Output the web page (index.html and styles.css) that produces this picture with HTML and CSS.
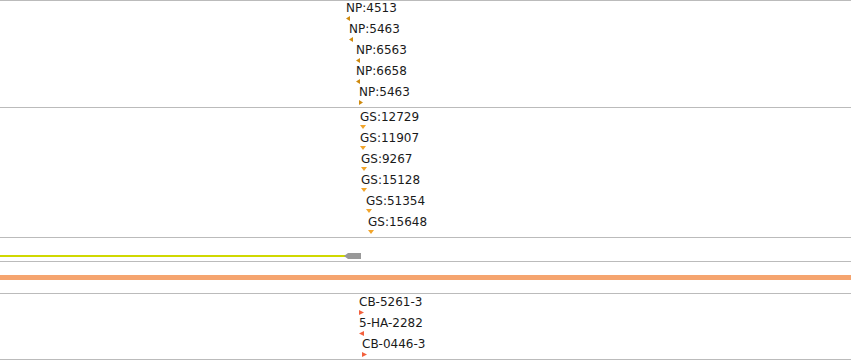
FILE: index.html
```html
<!DOCTYPE html>
<html lang="en">
<head>
    <meta charset="UTF-8">
    <title>Track view</title>
    <link rel="stylesheet" href="styles.css">
</head>
<body>
    <div class="tracks">
        <!-- NP track -->
        <div class="track track-np">
            <div class="feature" style="margin-left:346px"><span class="label">NP:4513</span><svg class="tri" width="5" height="5"><polygon points="4,0 4,5 0,2.5"/></svg></div>
            <div class="feature" style="margin-left:349px"><span class="label">NP:5463</span><svg class="tri" width="5" height="5"><polygon points="4,0 4,5 0,2.5"/></svg></div>
            <div class="feature" style="margin-left:356px"><span class="label">NP:6563</span><svg class="tri" width="5" height="5"><polygon points="4,0 4,5 0,2.5"/></svg></div>
            <div class="feature" style="margin-left:356px"><span class="label">NP:6658</span><svg class="tri" width="5" height="5"><polygon points="4,0 4,5 0,2.5"/></svg></div>
            <div class="feature" style="margin-left:359px"><span class="label">NP:5463</span><svg class="tri" width="5" height="5"><polygon points="0,0 0,5 4,2.5"/></svg></div>
        </div>

        <!-- GS track -->
        <div class="track track-gs">
            <div class="feature" style="margin-left:360px"><span class="label">GS:12729</span><svg class="tri" width="6" height="5"><polygon points="0,0 6,0 3,4"/></svg></div>
            <div class="feature" style="margin-left:360px"><span class="label">GS:11907</span><svg class="tri" width="6" height="5"><polygon points="0,0 6,0 3,4"/></svg></div>
            <div class="feature" style="margin-left:361px"><span class="label">GS:9267</span><svg class="tri" width="6" height="5"><polygon points="0,0 6,0 3,4"/></svg></div>
            <div class="feature" style="margin-left:361px"><span class="label">GS:15128</span><svg class="tri" width="6" height="5"><polygon points="0,0 6,0 3,4"/></svg></div>
            <div class="feature" style="margin-left:366px"><span class="label">GS:51354</span><svg class="tri" width="6" height="5"><polygon points="0,0 6,0 3,4"/></svg></div>
            <div class="feature" style="margin-left:368px"><span class="label">GS:15648</span><svg class="tri" width="6" height="5"><polygon points="0,0 6,0 3,4"/></svg></div>
        </div>

        <!-- transcript track -->
        <div class="track track-tx">
            <div class="tx-row">
                <div class="tx-line"></div>
                <svg class="tx-head" width="17" height="6"><polygon points="0,3 4,0 17,0 17,6 4,6"/></svg>
            </div>
        </div>

        <!-- sequence track -->
        <div class="track track-seq">
            <div class="seq-band"></div>
        </div>

        <!-- CB track -->
        <div class="track track-cb">
            <div class="feature" style="margin-left:359px"><span class="label">CB-5261-3</span><svg class="tri" width="5" height="5"><polygon points="0,0 0,5 5,2.5"/></svg></div>
            <div class="feature" style="margin-left:359px"><span class="label">5-HA-2282</span><svg class="tri" width="5" height="5"><polygon points="5,0 5,5 0,2.5"/></svg></div>
            <div class="feature" style="margin-left:362px"><span class="label">CB-0446-3</span><svg class="tri" width="5" height="5"><polygon points="0,0 0,5 5,2.5"/></svg></div>
        </div>
    </div>
</body>
</html>
```

FILE: styles.css
```css
body {
    margin: 0;
    background-color: #fff;
    font-family: "DejaVu Sans", sans-serif;
    color: #1a1a1a;
}
.tracks {
    width: 851px;
    border-top: 1px solid #bbb;
}
.track {
    border-bottom: 1px solid #bbb;
    box-sizing: border-box;
}
.feature {
    display: flex;
    flex-direction: column;
    align-items: flex-start;
    height: 21px;
}
.label {
    font-size: 12px;
    line-height: 13px;
    height: 13px;
    white-space: nowrap;
}
.tri {
    display: block;
    margin-top: 1px;
}
.track-np {
    height: 107px;
    padding-top: 1px;
}
.track-np .tri {
    fill: #cf8a0e;
}
.track-gs {
    height: 130px;
    padding-top: 3px;
}
.track-gs .tri {
    fill: #f2a52a;
}
.track-tx {
    height: 24px;
    padding-top: 15px;
}
.tx-row {
    display: flex;
    align-items: center;
}
.tx-line {
    width: 346px;
    height: 2px;
    background-color: #d0d800;
}
.tx-head {
    display: block;
    margin-left: -2px;
    fill: #999;
}
.track-seq {
    height: 32px;
    padding-top: 13px;
}
.seq-band {
    height: 5px;
    background-color: #f5a46f;
}
.track-cb {
    height: 66px;
    padding-top: 2px;
}
.track-cb .tri {
    fill: #f3603d;
}
```
